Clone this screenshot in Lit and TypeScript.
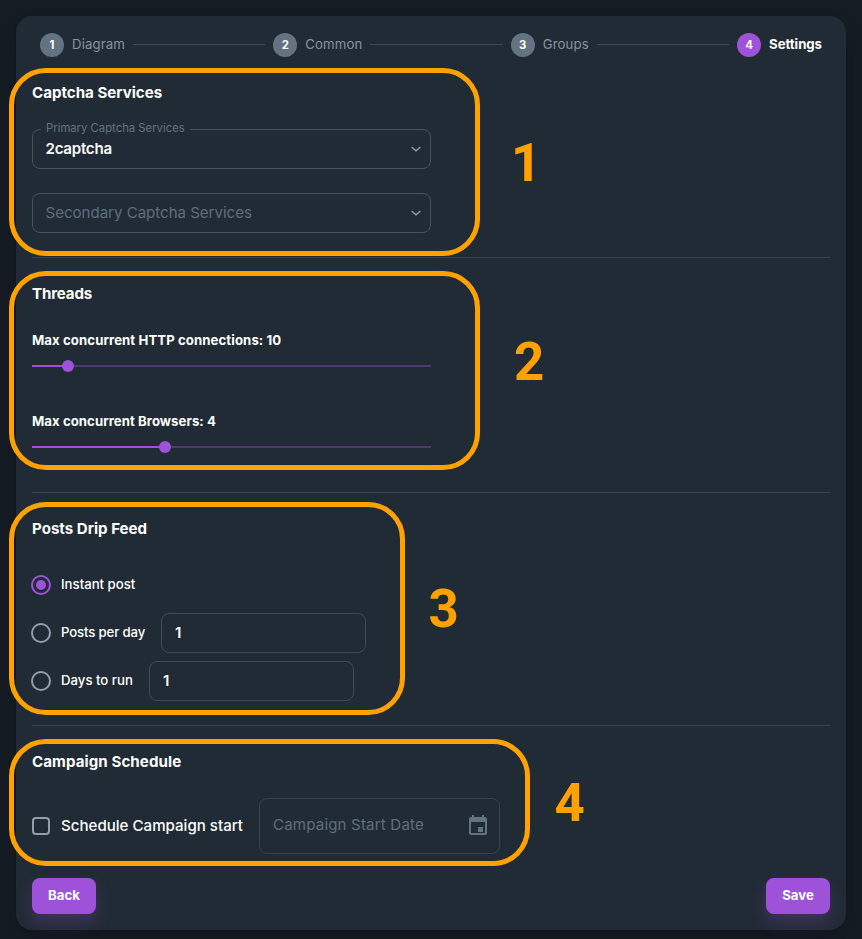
import { LitElement, html, css, nothing } from "lit";
import { customElement, property } from "lit/decorators.js";
import { classMap } from "lit/directives/class-map.js";

const steps = ["Diagram", "Common", "Groups", "Settings"];

const chevron = html`<svg class="chevron" width="12" height="12" viewBox="0 0 12 12">
  <path d="M1.6 4 6 7.8 10.4 4" fill="none" stroke="currentColor" stroke-width="1.5" />
</svg>`;

@customElement("range-slider")
export class RangeSlider extends LitElement {
  @property({ type: Number }) percent = 0;

  static styles = css`
    :host { display: block; }
    .track { position: relative; height: 2px; background: #4f3a70; }
    .fill { height: 2px; background: #9e52d9; }
    .thumb {
      position: absolute; top: -5px; width: 12px; height: 12px;
      margin-left: -6px; border-radius: 50%; background: #9e52d9;
    }
  `;

  render() {
    return html`<div class="track">
      <div class="fill" style="width:${this.percent}%"></div>
      <div class="thumb" style="left:${this.percent}%"></div>
    </div>`;
  }
}

@customElement("app-root")
export class AppRoot extends LitElement {
  static styles = css`
    * { box-sizing: border-box; }
    :host {
      display: block; position: relative; height: 939px; overflow: hidden;
      padding: 16px; background: #161c24; color: #fff; box-sizing: border-box;
      font: 500 13.2px/22px Inter, "Liberation Sans", sans-serif;
      white-space: nowrap;
    }
    .card {
      height: 914px; padding: 17px 16px 16px; border-radius: 16px; background: #212b35;
      box-shadow: 0 0 2px rgba(0, 0, 0, 0.2), 0 12px 24px -4px rgba(0, 0, 0, 0.24);
      display: flex; flex-direction: column;
    }

    .stepper { display: flex; align-items: center; height: 24px; padding: 0 8px; flex: none; }
    .step { display: flex; align-items: center; gap: 8px; }
    .dot {
      width: 24px; height: 24px; border-radius: 50%; background: #637381;
      font-size: 11.3px; font-weight: 700; line-height: 24px; text-align: center;
    }
    .step-label { color: #87939f; font-weight: 400; letter-spacing: 0.12px; padding-bottom: 2px; }
    .active .dot { background: #9e52d9; }
    .active .step-label { color: #fff; font-weight: 700; letter-spacing: -0.03px; }
    .line { flex: 1; height: 1px; margin: 0 8px 1px; background: #3b4952; }

    section { border-bottom: 1px solid #36434c; flex: none; }
    section.last { border-bottom: 0; }
    h2 { margin: 0; font-size: 15.1px; font-weight: 700; line-height: 24px; }
    .tight { letter-spacing: -0.15px; }
    .loose { letter-spacing: 0.08px; }

    .captcha { height: 177px; margin-top: 24px; }
    .threads, .drip, .schedule { padding-top: 24px; }
    .threads { height: 235px; }
    .drip { height: 233px; }
    .schedule { height: 152px; }

    .field {
      display: flex; align-items: center; justify-content: space-between;
      width: 399px; height: 40px; padding: 0 8px 0 12.5px; position: relative;
      border: 1px solid #44535c; border-radius: 8px; font-size: 15.1px;
    }
    .field + .field { margin-top: 24px; }
    .captcha h2 { margin-bottom: 24px; }
    .float {
      position: absolute; left: 8px; top: -9px; padding: 0 5px; height: 14px;
      background: #212b35; color: #637381; font-size: 11.3px; font-weight: 400;
      line-height: 14px; letter-spacing: 0;
    }
    .value { font-weight: 600; letter-spacing: -0.25px; }
    .placeholder { color: #5f6e7b; font-weight: 400; letter-spacing: -0.03px; }
    .chevron { color: #919eab; display: block; }

    .slider-label { font-weight: 700; line-height: 22px; }
    .first { margin: 23px 0 14px; }
    .second { margin: 43px 0 14px; letter-spacing: 0.05px; }
    range-slider { width: 399px; }

    .radio-row { display: flex; align-items: center; height: 40px; margin-top: 8px; margin-left: -1px; }
    .drip h2 + .radio-row { margin-top: 24px; }
    .radio {
      width: 20px; height: 20px; border: 2px solid #919eab; border-radius: 50%;
      margin-right: 10px; flex: none; display: grid; place-items: center;
    }
    .radio.on { border-color: #9e52d9; }
    .radio.on::after { content: ""; width: 10px; height: 10px; border-radius: 50%; background: #9e52d9; }
    .number {
      width: 205px; height: 40px; border: 1px solid #3e4b55; border-radius: 8px;
      padding-left: 13px; font-size: 15.1px; font-weight: 600; line-height: 38px;
    }
    .radio-label { padding-bottom: 2px; }
    .days { width: 88px; }
    .posts { width: 100px; letter-spacing: -0.14px; }

    .schedule-row { display: flex; align-items: center; height: 56px; margin-top: 24px; }
    .checkbox { width: 18px; height: 18px; border: 2px solid #919eab; border-radius: 4px; }
    .check-label { width: 209px; padding-left: 11px; font-size: 15.1px; }
    .date {
      display: flex; align-items: center; justify-content: space-between;
      width: 241px; height: 56px; padding: 0 9px 0 13px;
      border: 1px solid #36434d; border-radius: 8px; font-size: 15.1px;
    }
    .date .placeholder { letter-spacing: 0.16px; padding-bottom: 2px; }
    .date svg { display: block; color: #637381; }

    .actions { display: flex; justify-content: space-between; flex: none; }
    button {
      width: 64px; height: 36px; padding: 0 0 2px; border: 0; border-radius: 8px;
      background: #9e52d9; color: #fff; font: inherit; font-weight: 700;
      box-shadow: 0 8px 16px rgba(158, 82, 217, 0.24);
    }

    .frame {
      position: absolute; left: 9px; border: 5px solid #ffa200; border-radius: 37px;
    }
    .mark {
      position: absolute; color: #ffa200; font: 700 52.8px/1 Roboto, "Liberation Sans", sans-serif;
    }
    .f1 { top: 68px; width: 471px; height: 188px; }
    .f2 { top: 271px; width: 471px; height: 199px; }
    .f3 { top: 502px; width: 396px; height: 213px; }
    .f4 { top: 739px; width: 521px; height: 127px; }
    .m1 { left: 511px; top: 137px; }
    .m2 { left: 514px; top: 336px; }
    .m3 { left: 428.5px; top: 583px; }
    .m4 { left: 554.5px; top: 777px; }
  `;

  render() {
    return html`
      <main class="card">
        <nav class="stepper">
          ${steps.map((label, i) => html`
            ${i ? html`<span class="line"></span>` : nothing}
            <span class=${classMap({ step: true, active: i === 3 })}>
              <span class="dot">${i + 1}</span><span class="step-label">${label}</span>
            </span>`)}
        </nav>

        <section class="captcha">
          <h2>Captcha Services</h2>
          <div class="field">
            <span class="float">Primary Captcha Services</span>
            <span class="value">2captcha</span>${chevron}
          </div>
          <div class="field">
            <span class="placeholder">Secondary Captcha Services</span>${chevron}
          </div>
        </section>

        <section class="threads">
          <h2 class="tight">Threads</h2>
          <div class="slider-label first loose">Max concurrent HTTP connections: 10</div>
          <range-slider .percent=${9.1}></range-slider>
          <div class="slider-label second">Max concurrent Browsers: 4</div>
          <range-slider .percent=${33.33}></range-slider>
        </section>

        <section class="drip">
          <h2>Posts Drip Feed</h2>
          <div class="radio-row"><span class="radio on"></span><span class="radio-label">Instant post</span></div>
          <div class="radio-row">
            <span class="radio"></span><span class="radio-label posts">Posts per day</span>
            <div class="number">1</div>
          </div>
          <div class="radio-row">
            <span class="radio"></span><span class="radio-label days">Days to run</span>
            <div class="number">1</div>
          </div>
        </section>

        <section class="schedule last">
          <h2 class="loose">Campaign Schedule</h2>
          <div class="schedule-row">
            <span class="checkbox"></span><span class="check-label">Schedule Campaign start</span>
            <div class="date">
              <span class="placeholder">Campaign Start Date</span>
              <svg width="24" height="24" viewBox="0 0 24 24" fill="currentColor">
                <path d="M17 13h-5v5h5v-5zM16 1v2H8V1H6v2H5c-1.1 0-2 .9-2 2v14c0 1.1.9 2 2 2h14c1.1 0 2-.9 2-2V5c0-1.1-.9-2-2-2h-1V1h-2zm3 18H5V8h14v11z" />
              </svg>
            </div>
          </div>
        </section>

        <div class="actions"><button>Back</button><button>Save</button></div>
      </main>

      <div class="frame f1"></div><div class="mark m1">1</div>
      <div class="frame f2"></div><div class="mark m2">2</div>
      <div class="frame f3"></div><div class="mark m3">3</div>
      <div class="frame f4"></div><div class="mark m4">4</div>
    `;
  }
}
